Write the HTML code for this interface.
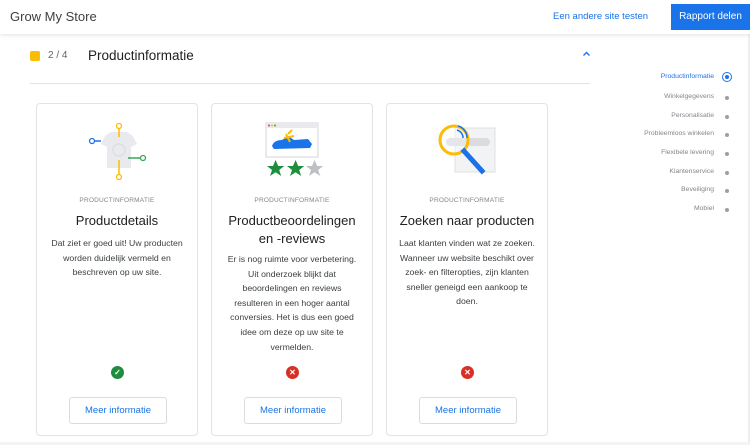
<!DOCTYPE html>
<html><head><meta charset="utf-8"><style>
*{margin:0;padding:0;box-sizing:border-box}
body{width:750px;height:445px;overflow:hidden;background:#fff;font-family:"Liberation Sans",Arial,sans-serif;position:relative;color:#202124}
.hdr{position:absolute;left:0;top:0;width:750px;height:34px;background:#fff;box-shadow:0 1px 4px rgba(0,0,0,.12);z-index:2}
.abs{position:absolute}
.card{position:absolute;top:103px;width:162px;height:333px;border:1px solid #e3e3e3;border-radius:4px;background:#fff;text-align:center}
.lbl{position:absolute;top:93px;width:100%;font-size:6.5px;color:#80868b;letter-spacing:.2px}
.ttl{position:absolute;top:108px;left:14px;right:14px;font-size:13px;line-height:18px;color:#202124}
.desc{position:absolute;left:13px;right:13px;font-size:8.7px;line-height:14.6px;color:#3c4043}
.st{position:absolute;top:262px;left:74px;width:13px;height:13px;border-radius:50%;color:#fff;font-size:8px;line-height:13px;font-weight:bold}
.btn{position:absolute;top:293px;left:32px;width:98px;height:27px;border:1px solid #dadce0;border-radius:3px;color:#1a73e8;font-size:9.5px;line-height:25px}
.nav{position:absolute;right:36px;font-size:6.8px;color:#80868b;text-align:right;white-space:nowrap}
.dot{position:absolute;left:725px;width:4px;height:4px;border-radius:50%;background:#9aa0a6}
</style></head><body>
<div class="hdr">
<div class="abs" style="left:10px;top:9px;font-size:13px;color:#3c4043">Grow My Store</div>
<div class="abs" style="left:553px;top:11px;font-size:9.5px;color:#1a73e8">Een andere site testen</div>
<div class="abs" style="left:671px;top:4px;width:79px;height:26px;background:#1a73e8;color:#fff;font-size:10px;line-height:26px;text-align:center">Rapport delen</div>
</div>
<div class="abs" style="left:748px;top:34px;width:2px;height:411px;background:#eee"></div>
<div class="abs" style="left:30px;top:51px;width:10px;height:10px;border-radius:2px;background:#fbbc04"></div>
<div class="abs" style="left:48px;top:50px;font-size:10px;color:#5f6368">2 / 4</div>
<div class="abs" style="left:88px;top:48px;font-size:13.5px;color:#202124">Productinformatie</div>
<svg class="abs" style="left:582px;top:51px" width="9" height="6"><path d="M1.5 4.5L4.5 1.5L7.5 4.5" stroke="#1a73e8" stroke-width="1.4" fill="none"/></svg>
<div class="abs" style="left:30px;top:83px;width:560px;height:1px;background:#e3e3e3"></div>
<div class="abs" style="left:0;top:442px;width:750px;height:3px;background:#f3f3f3"></div>

<div class="card" style="left:36px">
<svg class="abs" style="left:50px;top:16px" width="64" height="62" viewBox="0 0 64 62">
<path d="M18 16 L24 12 L40 12 L46 16 L50 24 L44 27 L44 48 L20 48 L20 27 L14 24 Z" fill="#e8eaed"/>
<circle cx="32" cy="30" r="6" fill="none" stroke="#dadce0" stroke-width="1.2"/>
<line x1="32" y1="8" x2="32" y2="17" stroke="#fbbc04" stroke-width="1.5"/><circle cx="32" cy="6" r="2.5" fill="#fff" stroke="#fbbc04" stroke-width="1.3"/>
<line x1="32" y1="40" x2="32" y2="55" stroke="#fbbc04" stroke-width="1.5"/><circle cx="32" cy="57" r="2.5" fill="#fff" stroke="#fbbc04" stroke-width="1.3"/>
<line x1="7" y1="21" x2="14" y2="21" stroke="#1a73e8" stroke-width="1.5"/><circle cx="5" cy="21" r="2.5" fill="#fff" stroke="#1a73e8" stroke-width="1.3"/>
<line x1="41" y1="38" x2="53" y2="38" stroke="#34a853" stroke-width="1.5"/><circle cx="56" cy="38" r="2.5" fill="#fff" stroke="#34a853" stroke-width="1.3"/>
</svg>
<div class="lbl">PRODUCTINFORMATIE</div>
<div class="ttl">Productdetails</div>
<div class="desc" style="top:132px;left:10px;right:10px">Dat ziet er goed uit! Uw producten worden duidelijk vermeld en beschreven op uw site.</div>
<div class="st" style="background:#1e8e3e">✓</div>
<div class="btn">Meer informatie</div>
</div>

<div class="card" style="left:211px">
<svg class="abs" style="left:52px;top:18px" width="60" height="58" viewBox="0 0 60 58">
<rect x="2" y="1" width="52" height="34" fill="#fff" stroke="#dadce0" stroke-width="1.2"/>
<rect x="2" y="1" width="52" height="5" fill="#e8eaed"/>
<circle cx="5" cy="3.5" r="1" fill="#ea4335"/><circle cx="8" cy="3.5" r="1" fill="#fbbc04"/><circle cx="11" cy="3.5" r="1" fill="#34a853"/>
<path d="M8 24 Q10 18 18 18 L24 14 L30 18 L44 17 L48 22 L46 26 L10 27 Z" fill="#1a73e8"/>
<path d="M22 12 L26 20 M20 16 L30 14 M24 12 L28 8" stroke="#fbbc04" stroke-width="2" fill="none"/>
<path d="M9 50 l2.6 -6 l2.6 6 l6 0 l-5 4 l2 6 l-5.6 -3.8 l-5.6 3.8 l2 -6 l-5 -4 z" fill="#1e8e3e" transform="translate(0,-6)"/>
<path d="M29 50 l2.6 -6 l2.6 6 l6 0 l-5 4 l2 6 l-5.6 -3.8 l-5.6 3.8 l2 -6 l-5 -4 z" fill="#1e8e3e" transform="translate(0,-6)"/>
<path d="M49 50 l2.6 -6 l2.6 6 l6 0 l-5 4 l2 6 l-5.6 -3.8 l-5.6 3.8 l2 -6 l-5 -4 z" fill="#bdc1c6" transform="translate(-1,-6)"/>
</svg>
<div class="lbl">PRODUCTINFORMATIE</div>
<div class="ttl">Productbeoordelingen en -reviews</div>
<div class="desc" style="top:148px">Er is nog ruimte voor verbetering. Uit onderzoek blijkt dat beoordelingen en reviews resulteren in een hoger aantal conversies. Het is dus een goed idee om deze op uw site te vermelden.</div>
<div class="st" style="background:#d93025">✕</div>
<div class="btn">Meer informatie</div>
</div>

<div class="card" style="left:386px">
<svg class="abs" style="left:50px;top:16px" width="64" height="64" viewBox="0 0 64 64">
<rect x="18" y="8" width="40" height="44" fill="#f1f3f4" stroke="#e0e0e0"/>
<rect x="9" y="18" width="44" height="8" rx="4" fill="#dadce0"/>
<circle cx="17" cy="20" r="14" fill="rgba(255,255,255,.3)" stroke="#fbbc04" stroke-width="3"/>
<path d="M20 10 A8 8 0 0 1 26 18 M21 6 A12 12 0 0 1 30 18" stroke="#1a73e8" stroke-width="1.5" fill="none"/>
<path d="M27 31 L45 51" stroke="#1a73e8" stroke-width="5" stroke-linecap="square"/>
</svg>
<div class="lbl">PRODUCTINFORMATIE</div>
<div class="ttl" style="left:4px;right:4px">Zoeken naar producten</div>
<div class="desc" style="top:132px;left:10px;right:10px">Laat klanten vinden wat ze zoeken. Wanneer uw website beschikt over zoek- en filteropties, zijn klanten sneller geneigd een aankoop te doen.</div>
<div class="st" style="background:#d93025">✕</div>
<div class="btn">Meer informatie</div>
</div>

<div class="nav" style="top:73px;color:#1a73e8">Productinformatie</div>
<div class="abs" style="left:722px;top:72px;width:10px;height:10px;border-radius:50%;border:1px solid #1a73e8"></div>
<div class="abs" style="left:725px;top:75px;width:4px;height:4px;border-radius:50%;background:#1a73e8"></div>
<div class="nav" style="top:93px">Winkelgegevens</div><div class="dot" style="top:96px"></div>
<div class="nav" style="top:112px">Personalisatie</div><div class="dot" style="top:115px"></div>
<div class="nav" style="top:130px">Probleemloos winkelen</div><div class="dot" style="top:133px"></div>
<div class="nav" style="top:149px">Flexibele levering</div><div class="dot" style="top:152px"></div>
<div class="nav" style="top:168px">Klantenservice</div><div class="dot" style="top:171px"></div>
<div class="nav" style="top:186px">Beveiliging</div><div class="dot" style="top:189px"></div>
<div class="nav" style="top:205px">Mobiel</div><div class="dot" style="top:208px"></div>
</body></html>
